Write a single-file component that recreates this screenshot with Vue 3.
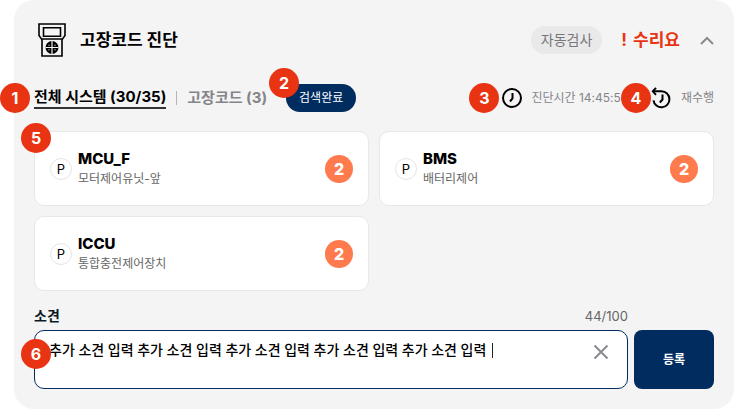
<script setup>
import { ref, computed } from 'vue'

const opinion = ref(Array(5).fill('추가 소견 입력').join(' '))
const count = computed(() => opinion.value.length)
const systems = [
  { code: 'MCU_F', name: '모터제어유닛-앞', faults: 2, marker: 5 },
  { code: 'BMS', name: '배터리제어', faults: 2 },
  { code: 'ICCU', name: '통합충전제어장치', faults: 2 },
]
</script>

<template>
  <section class="panel">
    <header class="head">
      <svg class="device" width="28" height="34" viewBox="0 0 28 34" fill="none" stroke="#000" stroke-width="1.600">
        <path d="M1 1h26v11.500l-2.500 3.500h-21L1 12.500z" />
        <path d="M5.500 4.800h17v8.400h-17z" />
        <path d="M4 16v17h20V16" />
        <circle cx="14" cy="24.500" r="6.500" fill="#000" stroke="none" />
        <path d="M14 18v13M7.500 24.500h13" stroke="#f4f4f4" stroke-width="1.200" />
        <path d="M11 23v-1.500M17 23v-1.500M11 26v1.500M17 26v1.500" stroke="#bbb" stroke-width="1" />
      </svg>
      <h1>고장코드 진단</h1>
      <span class="auto">자동검사</span>
      <strong class="repair"><span>!</span>수리요</strong>
      <button class="plain fold" aria-label="접기">
        <svg width="14" height="9" viewBox="0 0 14 9" fill="none" stroke="#8b8b8f" stroke-width="2">
          <path d="M1 8l6-6 6 6" />
        </svg>
      </button>
    </header>

    <div class="bar">
      <span class="marker m1">1</span>
      <button class="plain tab active">전체 시스템 (30/35)</button>
      <i class="divider"></i>
      <button class="plain tab">고장코드 (3)</button>
      <span class="done">검색완료<span class="marker m2">2</span></span>
      <div class="time">
        <span class="marker m3">3</span>
        <svg width="22" height="22" viewBox="0 0 22 22" fill="none" stroke="#000" stroke-width="2">
          <circle cx="11" cy="11" r="9" />
          <path d="M11.500 6v5.500L9 14.500" />
        </svg>
        <span>진단시간 14:45:5</span>
      </div>
      <button class="plain rerun">
        <span class="marker m4">4</span>
        <svg width="22" height="22" viewBox="0 0 22 22" fill="none" stroke="#000" stroke-width="2">
          <path d="M2 4.300h8.500a8 8 0 1 1-8 9" />
          <path d="M5 .8L1.800 4.300 5 7.800" />
          <path d="M11.500 7.500v5L8.800 15.500" />
        </svg>
        <span>재수행</span>
      </button>
    </div>

    <ul class="grid">
      <li v-for="s in systems" :key="s.code" class="card">
        <span v-if="s.marker" class="marker m5">{{ s.marker }}</span>
        <span class="p">P</span>
        <div class="names">
          <h2>{{ s.code }}</h2>
          <p>{{ s.name }}</p>
        </div>
        <span class="faults">{{ s.faults }}</span>
      </li>
    </ul>

    <form class="form" @submit.prevent>
      <div class="field">
        <div class="caption">
          <label for="opinion">소견</label>
          <span>{{ count }}/100</span>
        </div>
        <div class="box">
          <textarea id="opinion" v-model="opinion" maxlength="100" rows="2"></textarea>
          <i class="caret"></i>
          <button type="button" class="plain clear" aria-label="지우기" @click="opinion = ''">
            <svg width="16" height="16" viewBox="0 0 16 16" fill="none" stroke="#8b8b8f" stroke-width="2">
              <path d="M1.500 1.500l13 13M14.500 1.500l-13 13" />
            </svg>
          </button>
          <span class="marker m6">6</span>
        </div>
      </div>
      <button class="submit">등록</button>
    </form>
  </section>
</template>

<style>
body {
  margin: 0;
  background: #fff;
}
</style>

<style scoped>
* {
  box-sizing: border-box;
}
.panel {
  margin-left: 14px;
  padding: 0 20px 20px;
  border-radius: 20px;
  background: #f4f4f4;
  color: #000;
  font-family: Inter, "Noto Sans CJK KR", sans-serif;
}
.plain {
  padding: 0;
  border: 0;
  background: none;
  font: inherit;
  color: inherit;
  cursor: pointer;
}
svg {
  display: block;
  flex: none;
}
h1, h2, p, ul {
  margin: 0;
  padding: 0;
}
.head {
  display: flex;
  align-items: center;
  height: 80px;
  padding-left: 4px;
}
h1 {
  margin-left: 14px;
  margin-right: auto;
  font-size: 17px;
  line-height: 24px;
}
.auto {
  padding: 0 10px;
  border-radius: 14px;
  background: #e9e9e9;
  color: #77777b;
  font-size: 14px;
  line-height: 28px;
}
.repair {
  display: flex;
  gap: 6px;
  margin-left: 19px;
  color: #e83412;
  font-size: 17px;
  line-height: 24px;
}
.fold {
  margin-left: 20px;
}
.bar {
  position: relative;
  display: flex;
  align-items: center;
  height: 36px;
}
.tab {
  color: #858589;
  font-size: 15px;
  font-weight: 700;
  line-height: 20px;
}
.active {
  border-bottom: 2px solid #333;
  color: #000;
}
.divider {
  width: 1px;
  height: 14px;
  margin: 0 10px;
  background: #b5b5b8;
}
.done {
  position: relative;
  margin-left: 19px;
  padding: 0 13px;
  border-radius: 14px;
  background: #002c5f;
  color: #fff;
  font-size: 12px;
  line-height: 28px;
}
.time,
.rerun {
  position: relative;
  display: flex;
  align-items: center;
  gap: 8px;
  color: #858589;
  font-size: 12px;
  line-height: 20px;
}
.time {
  margin-left: auto;
}
.rerun {
  margin-left: 30px;
}
.marker {
  position: absolute;
  z-index: 1;
  width: 30px;
  height: 30px;
  border-radius: 50%;
  background: #e83412;
  color: #fff;
  font-size: 16px;
  font-weight: 700;
  line-height: 30px;
  text-align: center;
}
.m1 {
  left: -34px;
  top: 3px;
}
.m2 {
  left: -17px;
  top: -16px;
}
.m3,
.m4 {
  left: -32px;
  top: -4px;
}
.m4 {
  left: -30px;
}
.m5 {
  left: -14px;
  top: -9px;
}
.m6 {
  left: -14px;
  top: 8px;
}
.grid {
  display: grid;
  grid-template-columns: 1fr 1fr;
  gap: 10px;
  margin-top: 15px;
  list-style: none;
}
.card {
  position: relative;
  display: flex;
  align-items: center;
  height: 75px;
  padding: 0 15px;
  border: 1px solid #e8e8e8;
  border-radius: 10px;
  background: #fff;
}
.p {
  width: 22px;
  height: 22px;
  border: 1px solid #e5e5e5;
  border-radius: 50%;
  font-size: 13px;
  line-height: 20px;
  text-align: center;
}
.names {
  flex: 1;
  margin-left: 6px;
}
h2 {
  font-size: 15px;
  font-weight: 800;
  line-height: 20px;
}
.names p {
  color: #666;
  font-size: 12px;
  line-height: 20px;
}
.faults {
  width: 28px;
  height: 28px;
  border-radius: 50%;
  background: #ff7a4d;
  color: #fff;
  font-size: 16px;
  font-weight: 800;
  line-height: 28px;
  text-align: center;
}
.form {
  display: flex;
  align-items: flex-end;
  gap: 6px;
  margin-top: 15px;
}
.field {
  flex: 1;
}
.caption {
  display: flex;
  justify-content: space-between;
  height: 24px;
  color: #666;
  font-size: 13px;
  line-height: 20px;
}
.caption label {
  color: #0b1a24;
  font-size: 14px;
  font-weight: 700;
}
.box {
  position: relative;
  display: flex;
  height: 59px;
  border: 1px solid #002c5f;
  border-radius: 10px;
  background: #fff;
}
textarea {
  flex: 1;
  min-width: 0;
  padding: 9px 50px 0 14px;
  border: 0;
  outline: 0;
  border-radius: 10px;
  background: none;
  resize: none;
  overflow: hidden;
  color: #000;
  font: 500 14px/20px "Noto Sans", "Noto Sans CJK KR", sans-serif;
}
.caret {
  position: absolute;
  left: 457px;
  top: 12px;
  width: 1px;
  height: 15px;
  background: #222;
}
.clear {
  position: absolute;
  right: 18px;
  top: 13px;
}
.submit {
  width: 80px;
  height: 59px;
  padding: 0;
  border: 0;
  border-radius: 8px;
  background: #002c5f;
  color: #fff;
  font: 700 12px/20px Inter, "Noto Sans CJK KR", sans-serif;
}
</style>
